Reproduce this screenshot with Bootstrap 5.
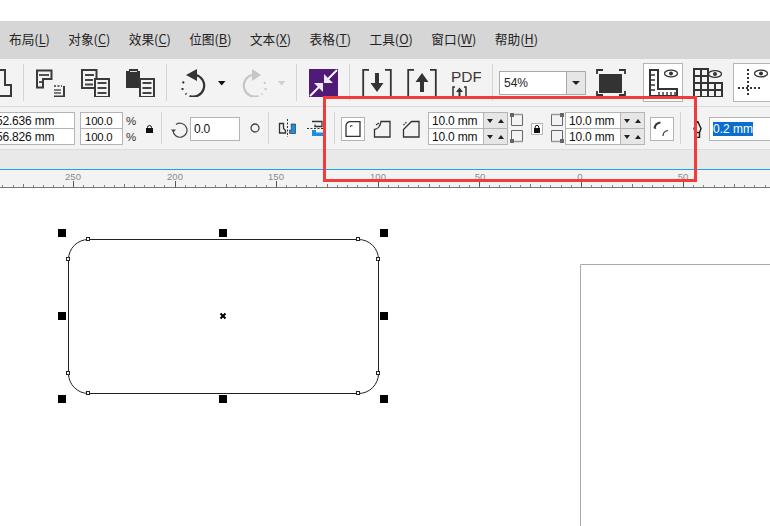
<!DOCTYPE html>
<html lang="zh-CN">
<head>
<meta charset="utf-8">
<title>CorelDRAW</title>
<link href="https://cdn.jsdelivr.net/npm/bootstrap@5.3.0/dist/css/bootstrap.min.css" rel="stylesheet">
<style>
html,body{margin:0;height:526px;overflow:hidden;background:#fff}
body{font-family:"Liberation Sans","Noto Sans CJK SC",sans-serif;color:#222;position:relative;width:770px}
svg{display:block;flex:none}
.top-gap{height:21px;background:#fff}
.menu-bar{height:38px;background:#d6d6d6;padding:0 0 3px 9px;gap:18.4px;font:12.7px "Noto Sans CJK SC",sans-serif;color:#222}
.menu-bar u{text-underline-offset:2px}
.menu-bar span{white-space:nowrap}
.tool-bar{height:47px;background:#f3f3f3;overflow:hidden}
.prop-bar{height:44px;background:#f3f3f3;border-top:1px solid #dcdcdc;border-bottom:1px solid #dcdcdc;overflow:hidden}
.band{height:20px;background:#e9e9e9;border-bottom:1px solid #1aa3e8}
.ruler-box{height:18px;background:#f3f3f3}
.vsep{width:1px;height:37px;background:#d4d4d4;flex:none}
.prop-bar .vsep{height:32px}
.sp-1{margin-left:1px}.sp-2{margin-left:2px}.sp-3{margin-left:3px}.sp-5{margin-left:5px}.sp-6{margin-left:6px}.sp-7{margin-left:7px}.sp-8{margin-left:8px}.sp-9{margin-left:9px}.sp-10{margin-left:10px}.sp-11{margin-left:11px}.sp-12{margin-left:12px}.sp-14{margin-left:14px}.sp-15{margin-left:15px}.sp-17{margin-left:17px}
.off-left{margin-left:-18px}
.nudge{margin-top:2px}
.zoom-combo{width:87px;height:24px;margin-top:1px;border:1px solid #aaa;background:#fff;font-size:12px;flex:none}
.zoom-combo .val{padding-left:4px;flex:1;color:#222}
.zoom-combo .arr{width:19px;height:100%;background:#e6e6e6;border-left:1px solid #aaa}
.tog{border:1px solid #b4b4b4;background:#fff;flex:none}
.tog-big{width:40px;height:39px;padding:0 0 0 5px}
.tog-cut{width:60px;height:39px;padding:0 0 0 3px}
.tog-sm{width:24px;height:24px}
.num{font-size:12px;letter-spacing:-.2px;line-height:17px;color:#111;white-space:nowrap;background:#fff;border:1px solid #b4b4b4;height:17px;padding-left:3px;overflow:hidden}
.num+.num{margin-top:-1px}
.stack2{height:34px;padding-top:1px;flex:none}
.pos-stack{width:83px;margin-left:-8px}
.pct-stack{width:43px}
.pct-stack .num{font-size:11.400px;padding-left:4px}
.pct-lab{font-size:11.500px;line-height:16px;color:#333;width:10px;flex:none;padding-top:2px}
.angle{width:50px;height:24px;line-height:22px;flex:none}
.spin-group{width:80px}
.spin-row{height:17px;border:1px solid #b4b4b4;background:#e6e6e6}
.spin-row+.spin-row{margin-top:-1px}
.spin-row .txt{width:55px;background:#fff;font-size:12px;letter-spacing:-.2px;line-height:17px;height:15px;padding-left:3px;border-right:1px solid #b4b4b4;white-space:nowrap;color:#111;overflow:hidden}
.spin-row .dn,.spin-row .up{flex:1;height:100%}
.lock-tog{width:12px;height:12px}
.line-input{width:70px;height:24px;border:1px solid #b4b4b4;background:#fff;padding:4px 0 0 3px;font-size:12px;line-height:14px;flex:none}
.line-input span{background:#0a6ed1;color:#fff;display:inline-block;height:14px;width:40px;white-space:nowrap;overflow:hidden}
.canvas-area{height:338px;background:#fff}
.red-frame{position:absolute;left:323px;top:96px;width:374px;height:86px;border:3px solid #f33b3b;pointer-events:none}
</style>
</head>
<body>
<div class="top-gap"></div>
<nav class="menu-bar d-flex align-items-center">
<span>布局(<u>L</u>)</span><span>对象(<u>C</u>)</span><span>效果(<u>C</u>)</span><span>位图(<u>B</u>)</span><span>文本(<u>X</u>)</span><span>表格(<u>T</u>)</span><span>工具(<u>O</u>)</span><span>窗口(<u>W</u>)</span><span>帮助(<u>H</u>)</span>
</nav>
<div class="tool-bar d-flex align-items-center">
<svg class="off-left" width="30" height="29" viewBox="0 0 30 29"><path d="M18 2h5v15h6v11H0" fill="none" stroke="#3a3a3a" stroke-width="2"/></svg>
<div class="vsep sp-11"></div>
<svg class="sp-12" width="30" height="29" viewBox="0 0 30 29"><path d="M1 2.500h14.500V11H7v8.500H1z" fill="none" stroke="#3a3a3a" stroke-width="2"/><path d="M3 7h10M3 14h3" stroke="#555" stroke-width="1.800"/><path d="M18 18h8" stroke="#3a3a3a" stroke-width="1.600" stroke-dasharray="2 1.500"/><path d="M28 18v10.500H18" fill="none" stroke="#3a3a3a" stroke-width="2"/><path d="M18 22h7M18 25h7" stroke="#555" stroke-width="1.400"/></svg>
<svg class="sp-15" width="30" height="29" viewBox="0 0 30 29"><path d="M1 2h14.500v18H1z" fill="none" stroke="#3a3a3a" stroke-width="2"/><path d="M4 7h9M4 12h8M4 16.500h8" stroke="#444" stroke-width="1.800"/><rect x="14" y="11" width="14" height="18" fill="#f3f3f3" stroke="#3a3a3a" stroke-width="2"/><path d="M16.500 15h9M16.500 20h9M16.500 25h9" stroke="#444" stroke-width="1.800"/></svg>
<svg class="sp-15" width="30" height="29" viewBox="0 0 30 29"><path d="M0 3h3V1h9v2h2v17H0z" fill="#333"/><path d="M4 3.500h7" stroke="#ddd"/><rect x="14" y="11" width="14" height="18" fill="#f3f3f3" stroke="#3a3a3a" stroke-width="2"/><path d="M16.500 15h9M16.500 20h9M16.500 25h9" stroke="#444" stroke-width="1.800"/></svg>
<div class="vsep sp-10"></div>
<svg class="sp-11" width="30" height="29" viewBox="0 0 30 29"><path d="M18 7a11 11 0 1 1-6.500 21" fill="none" stroke="#333" stroke-width="2.200"/><path d="M8 7L19 1v12z" fill="#333"/><path d="M7.500 25.500l1 .8M4.500 20v2M5.800 13.500l-1 1.800" stroke="#333" stroke-width="2"/></svg>
<svg class="sp-9" width="9" height="29" viewBox="0 0 9 29"><path d="M1 13h7.500L4.700 17.500z" fill="#111"/></svg>
<svg class="sp-14" width="30" height="29" viewBox="0 0 30 29"><path d="M12 7a11 11 0 1 0 6.500 21" fill="none" stroke="#c6c6c6" stroke-width="2.200"/><path d="M21 7L12 1v12z" fill="#c6c6c6"/><path d="M22.500 25.500l-1 .8M25.500 20v2M24.200 14l1 1.800" stroke="#c6c6c6" stroke-width="2"/></svg>
<svg class="sp-7" width="9" height="29" viewBox="0 0 9 29"><path d="M1 13h7.500L4.700 17.500z" fill="#cfcfcf"/></svg>
<div class="vsep sp-10"></div>
<svg class="sp-12" width="29" height="29" viewBox="0 0 29 29"><rect y="1" width="29" height="28" fill="#4f1a78"/><path d="M28 2l-9 9M1 28l9-9" stroke="#fff" stroke-width="1.800"/><path d="M15 15V6l9 9zM14 15v9l-9-9z" fill="#eee8f2"/></svg>
<div class="vsep sp-11"></div>
<svg class="sp-12" width="30" height="29" viewBox="0 0 30 29"><path d="M7 1.800H1.200V29M23 1.800h5.800V29" fill="none" stroke="#333" stroke-width="1.800"/><path d="M13 5h4v10h4.500L15 24l-6.500-9H13z" fill="#333"/></svg>
<svg class="sp-15" width="30" height="29" viewBox="0 0 30 29"><path d="M7 1.800H1.200V29M23 1.800h5.800V29" fill="none" stroke="#333" stroke-width="1.800"/><path d="M13 24h4V14h4.500L15 5l-6.500 9H13z" fill="#333"/></svg>
<svg class="sp-14" width="30" height="29" viewBox="0 0 30 29"><text x="0" y="14" font-family="Liberation Sans" font-size="15.500" fill="#3a3a3a">PDF</text><path d="M4 19H2v10M13 19h2v10" fill="none" stroke="#333" stroke-width="1.500"/><path d="M7.500 29v-5H5l3.500-4.500L12 24H9.500v5z" fill="#333"/></svg>
<div class="vsep sp-11"></div>
<div class="zoom-combo sp-6 d-flex align-items-center"><span class="val">54%</span><span class="arr d-flex align-items-center justify-content-center"><svg width="8" height="4" viewBox="0 0 8 4"><path d="M0 0h8L4 4z" fill="#222"/></svg></span></div>
<svg class="sp-10" width="30" height="29" viewBox="0 0 30 29"><path d="M1 6V2h6M23 2h6v4M1 23v4h6M23 27h6v-4" fill="none" stroke="#333" stroke-width="1.800"/><rect x="3" y="6" width="23" height="19" fill="#333"/></svg>
<div class="tog tog-big sp-17 d-flex align-items-center"><svg width="30" height="29" viewBox="0 0 30 29"><path d="M1 2h8v19h19v7H1z" fill="none" stroke="#333" stroke-width="2"/><path d="M2 7h4M2 12h4M2 17h4M2 22h4M10 24v4M14 24v4M18 24v4M22 24v4M26 24v4" stroke="#333" stroke-width="1.400"/><ellipse cx="22" cy="5.500" rx="6.500" ry="3.400" fill="none" stroke="#333" stroke-width="1.300"/><circle cx="22" cy="5.500" r="2" fill="#333"/></svg></div>
<svg class="sp-10" width="30" height="29" viewBox="0 0 30 29"><path d="M1 1h14v14H1zM1 15h28v14H1zM1 8h14M1 22h28M8 1v28M15 15v14M22 15v14" fill="none" stroke="#333" stroke-width="2"/><ellipse cx="22" cy="6" rx="6.500" ry="3.400" fill="none" stroke="#333" stroke-width="1.300"/><circle cx="22" cy="6" r="2" fill="#333"/></svg>
<div class="tog tog-cut sp-10 d-flex align-items-center"><svg width="33" height="29" viewBox="0 0 33 29"><path d="M11 1v28M1 20h22" fill="none" stroke="#333" stroke-width="2" stroke-dasharray="2 2"/><ellipse cx="24" cy="5.500" rx="6.500" ry="3.400" fill="none" stroke="#333" stroke-width="1.300"/><circle cx="24" cy="5.500" r="2" fill="#333"/></svg></div>
</div>
<div class="prop-bar d-flex align-items-center">
<div class="stack2 pos-stack"><div class="num">52.636 mm</div><div class="num">56.826 mm</div></div>
<div class="stack2 pct-stack sp-5"><div class="num">100.0</div><div class="num">100.0</div></div>
<div class="stack2 pct-lab sp-3"><div>%</div><div>%</div></div>
<svg class="sp-10 nudge" width="7" height="8" viewBox="0 0 7 8"><path d="M1.500 3.500V2.500a2 2 0 0 1 4 0v1" fill="none" stroke="#111"/><rect y="3" width="7" height="5" fill="#111"/></svg>
<div class="vsep sp-8"></div>
<svg class="sp-9 nudge" width="17" height="17" viewBox="0 0 17 17"><path d="M5 3.500a7 7 0 1 1-3 6" fill="none" stroke="#444" stroke-width="1.200"/><path d="M0 8.500h5L2.500 11.500z" fill="#444"/></svg>
<div class="num angle sp-2 nudge">0.0</div>
<svg class="sp-10" width="10" height="10" viewBox="0 0 10 10"><circle cx="5" cy="5" r="4" fill="none" stroke="#444" stroke-width="1.300"/></svg>
<div class="vsep sp-8"></div>
<svg class="sp-9" width="18" height="18" viewBox="0 0 18 18"><path d="M9.500 0v18" stroke="#333" stroke-dasharray="2 1.500"/><path d="M1.500 4.500h4v5l2 2v2.500h-6z" fill="none" stroke="#333" stroke-width="1.300"/><path d="M13 5h4.500v9.500h-6V11h2z" fill="#1b8ee0" stroke="#222" stroke-width=".6"/></svg>
<svg class="sp-11" width="18" height="18" viewBox="0 0 18 18"><path d="M0 9.500h17" stroke="#333" stroke-dasharray="2 1.500"/><path d="M5 2.500h10v5H8v-2" fill="none" stroke="#333" stroke-width="1.300"/><path d="M5 11h4v2.500h7v3.500H5z" fill="#1b8ee0"/></svg>
<div class="vsep sp-9"></div>
<div class="tog tog-sm sp-6 nudge d-flex align-items-center justify-content-center"><svg width="16" height="16" viewBox="0 0 16 16"><path d="M1 15.500V5a4.500 4.500 0 0 1 4.500-4.500H15v15z" fill="none" stroke="#333" stroke-width="1.300"/><path d="M5.500 6V4.800h2" fill="none" stroke="#333"/></svg></div>
<svg class="sp-8 nudge" width="18" height="18" viewBox="0 0 18 18"><path d="M1.500 17V9.500q5.500-1 6.500-8h9V17z" fill="none" stroke="#333" stroke-width="1.300"/><path d="M3 5l3-2" stroke="#333" stroke-width="1.200"/></svg>
<svg class="sp-11 nudge" width="18" height="18" viewBox="0 0 18 18"><path d="M1.500 17V9.500l8-8H17V17z" fill="none" stroke="#333" stroke-width="1.300"/><path d="M1.500 5l3-2.800" stroke="#333" stroke-width="1.200" stroke-dasharray="1.500 1"/></svg>
<div class="stack2 spin-group sp-8">
<div class="spin-row d-flex"><span class="txt">10.0 mm</span><span class="dn d-flex align-items-center justify-content-center"><svg width="6" height="4" viewBox="0 0 6 4"><path d="M0 0h6L3 4z" fill="#222"/></svg></span><span class="up d-flex align-items-center justify-content-center"><svg width="6" height="4" viewBox="0 0 6 4"><path d="M0 4h6L3 0z" fill="#222"/></svg></span></div>
<div class="spin-row d-flex"><span class="txt">10.0 mm</span><span class="dn d-flex align-items-center justify-content-center"><svg width="6" height="4" viewBox="0 0 6 4"><path d="M0 0h6L3 4z" fill="#222"/></svg></span><span class="up d-flex align-items-center justify-content-center"><svg width="6" height="4" viewBox="0 0 6 4"><path d="M0 4h6L3 0z" fill="#222"/></svg></span></div>
</div>
<svg class="sp-2" width="14" height="30" viewBox="0 0 14 30"><path d="M1.500 1.500h11v11h-11zM1.500 17.500h11v11h-11z" fill="none" stroke="#666"/><path d="M1 1.500h12M1 28.500h12" stroke="#999" stroke-width="1.500"/><rect width="4" height="4" fill="#666"/><rect y="26" width="4" height="4" fill="#666"/></svg>
<div class="tog lock-tog sp-7 nudge d-flex align-items-center justify-content-center"><svg width="6" height="8" viewBox="0 0 6 8"><path d="M1.200 3.500V2.200a1.800 1.800 0 0 1 3.600 0v1.300" fill="none" stroke="#111"/><rect y="3" width="6" height="5" fill="#111"/></svg></div>
<svg class="sp-7" width="14" height="30" viewBox="0 0 14 30"><path d="M1.500 1.500h11v11h-11zM1.500 17.500h11v11h-11z" fill="none" stroke="#666"/><path d="M1 1.500h12M1 28.500h12" stroke="#999" stroke-width="1.500"/><rect x="10" width="4" height="4" fill="#666"/><rect x="10" y="26" width="4" height="4" fill="#666"/></svg>
<div class="stack2 spin-group sp-1">
<div class="spin-row d-flex"><span class="txt">10.0 mm</span><span class="dn d-flex align-items-center justify-content-center"><svg width="6" height="4" viewBox="0 0 6 4"><path d="M0 0h6L3 4z" fill="#222"/></svg></span><span class="up d-flex align-items-center justify-content-center"><svg width="6" height="4" viewBox="0 0 6 4"><path d="M0 4h6L3 0z" fill="#222"/></svg></span></div>
<div class="spin-row d-flex"><span class="txt">10.0 mm</span><span class="dn d-flex align-items-center justify-content-center"><svg width="6" height="4" viewBox="0 0 6 4"><path d="M0 0h6L3 4z" fill="#222"/></svg></span><span class="up d-flex align-items-center justify-content-center"><svg width="6" height="4" viewBox="0 0 6 4"><path d="M0 4h6L3 0z" fill="#222"/></svg></span></div>
</div>
<div class="tog tog-sm sp-5 nudge d-flex align-items-center justify-content-center"><svg width="18" height="18" viewBox="0 0 18 18"><path d="M1.500 8.500a7 7 0 0 1 6-6" fill="none" stroke="#333" stroke-width="2"/><path d="M1 7.500l1.500 1.500 1-1" fill="#333"/><path d="M10 16a5.500 5.500 0 0 1 5-5.500" fill="none" stroke="#333" stroke-width="1.200"/></svg></div>
<div class="vsep sp-6"></div>
<svg class="sp-12 nudge" width="9" height="17" viewBox="0 0 9 17"><path d="M4.500 0L8 7.500 6.500 11.500h-4L1 7.500zM2.500 11.500h4v5h-4z" fill="none" stroke="#222" stroke-width="1.500"/></svg>
<div class="line-input sp-7 nudge"><span>0.2 mm</span></div>
</div>
<div class="band"></div>
<div class="ruler-box"><svg width="770" height="18" viewBox="0 0 770 18" font-family="Liberation Sans" font-size="9.500" fill="#8a8a8a" text-anchor="middle"><text x="73" y="10">250</text><text x="175" y="10">200</text><text x="276" y="10">150</text><text x="378" y="10">100</text><text x="480" y="10">50</text><text x="580" y="10">0</text><text x="683" y="10">50</text><path d="M73.500 11v6M175.500 11v6M276.500 11v6M378.500 11v6M479.500 11v6M581.500 11v6M683.500 11v6" stroke="#555"/><path d="M23.500 14v3M124.500 14v3M226.500 14v3M327.500 14v3M429.500 14v3M530.500 14v3M632.500 14v3M734.500 14v3" stroke="#777"/><path d="M2.500 15v2M13.500 15v2M33.500 15v2M43.500 15v2M53.500 15v2M63.500 15v2M83.500 15v2M93.500 15v2M104.500 15v2M114.500 15v2M134.500 15v2M144.500 15v2M154.500 15v2M164.500 15v2M185.500 15v2M195.500 15v2M205.500 15v2M215.500 15v2M235.500 15v2M245.500 15v2M256.500 15v2M266.500 15v2M286.500 15v2M296.500 15v2M306.500 15v2M316.500 15v2M337.500 15v2M347.500 15v2M357.500 15v2M367.500 15v2M388.500 15v2M398.500 15v2M408.500 15v2M418.500 15v2M439.500 15v2M449.500 15v2M459.500 15v2M469.500 15v2M489.500 15v2M499.500 15v2M510.500 15v2M520.500 15v2M540.500 15v2M550.500 15v2M561.500 15v2M571.500 15v2M591.500 15v2M601.500 15v2M612.500 15v2M622.500 15v2M642.500 15v2M652.500 15v2M663.500 15v2M673.500 15v2M693.500 15v2M703.500 15v2M714.500 15v2M724.500 15v2M744.500 15v2M754.500 15v2M765.500 15v2" stroke="#888"/><path d="M0 17.500h770" stroke="#777"/></svg></div>
<div class="canvas-area"><svg width="770" height="338" viewBox="0 188 770 338">
<path d="M580.500 526V264.500H770" fill="none" stroke="#aaa"/>
<rect x="68.500" y="239.500" width="310" height="154" rx="20" ry="20" fill="none" stroke="#222"/>
<g fill="#fff" stroke="#222"><rect x="86.500" y="237.500" width="3" height="3"/><rect x="356.500" y="237.500" width="3" height="3"/><rect x="66.500" y="257.500" width="3" height="3"/><rect x="376.500" y="257.500" width="3" height="3"/><rect x="66.500" y="371.500" width="3" height="3"/><rect x="376.500" y="371.500" width="3" height="3"/><rect x="86.500" y="391.500" width="3" height="3"/><rect x="356.500" y="391.500" width="3" height="3"/></g>
<g fill="#000"><rect x="58" y="229" width="8" height="8"/><rect x="219" y="229" width="8" height="8"/><rect x="380" y="229" width="8" height="8"/><rect x="58" y="312" width="8" height="8"/><rect x="380" y="312" width="8" height="8"/><rect x="58" y="395" width="8" height="8"/><rect x="219" y="395" width="8" height="8"/><rect x="380" y="395" width="8" height="8"/></g>
<path d="M220.500 313.500l5 5M225.500 313.500l-5 5" stroke="#000" stroke-width="2"/>
</svg></div>
<div class="red-frame"></div>
<script src="https://cdn.jsdelivr.net/npm/bootstrap@5.3.0/dist/js/bootstrap.bundle.min.js"></script>
</body>
</html>
